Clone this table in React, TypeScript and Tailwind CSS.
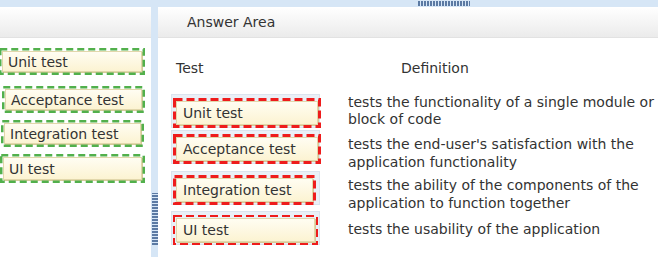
import React from "react";

function Dashed({ color, w, h, sw, dash }: { color: string; w: number; h: number; sw: number; dash: string }) {
  return (
    <svg className="absolute left-0 top-0 pointer-events-none" width={w} height={h}>
      <rect x={sw / 2} y={sw / 2} width={w - sw} height={h - sw} fill="none" stroke={color} strokeWidth={sw} strokeDasharray={dash} />
    </svg>
  );
}

function Tile({ label, pl = "pl-[5px]" }: { label: string; pl?: string }) {
  return (
    <div
      className={`flex h-full w-full items-center ${pl} border border-[#e2d7ab] bg-gradient-to-b from-[#fffdf2] to-[#fcf3d2] text-[14px] leading-none text-[#333] shadow-[1px_1px_0_#d6ca99]`}
    >
      {label}
    </div>
  );
}

function LeftItem({ label, cls, w, h = 27 }: { label: string; cls: string; w: number; h?: number }) {
  return (
    <div className={`relative p-[3px] ${cls}`} style={{ width: w, height: h }}>
      <Tile label={label} />
      <Dashed color="#52b04c" w={w} h={h} sw={2.5} dash="7 4" />
    </div>
  );
}

function DropRow({ label, def, w, cls, tpt, sw = 3 }: { label: string; def: React.ReactNode; w: number; cls: string; tpt: string; sw?: number }) {
  return (
    <div className={`flex h-[34px] items-start ${cls}`}>
      <div className="h-[34px] w-[149px] shrink-0 border border-[#dbe4ee] bg-[#eaf0f7] pl-[1px] pt-[3px]">
        <div className="relative h-[30px] p-[3px]" style={{ width: w }}>
          <Tile label={label} pl="pl-[6px]" />
          <Dashed color="#ee1c1c" w={w} h={30} sw={sw} dash="8 4" />
        </div>
      </div>
      <div className={`ml-[28px] whitespace-nowrap text-[14px] text-[#333] ${tpt}`}>{def}</div>
    </div>
  );
}

export default function App() {
  return (
    <div className="relative h-[257px] w-[658px] overflow-hidden bg-white" style={{ fontFamily: '"DejaVu Sans", Verdana, sans-serif' }}>
      <div className="relative h-[7px] bg-[#d6e6f6]">
        <div className="absolute left-[418px] top-[1px] h-[5px] w-[52px] bg-[repeating-linear-gradient(90deg,#3d5f8f_0_2px,transparent_2px_3px)] opacity-80" />
      </div>
      <div className="flex h-[250px]">
        <div className="w-[151px]">
          <div className="h-[31px] border-b border-[#e2e2e2] bg-gradient-to-b from-white to-[#ebebeb]" />
          <div className="flex flex-col pt-[10px]">
            <LeftItem label="Unit test" cls="-ml-[1px]" w={146} />
            <LeftItem label="Acceptance test" cls="ml-[2px] mt-[11px]" w={143} />
            <LeftItem label="Integration test" cls="ml-[1px] mt-[7px]" w={143} />
            <LeftItem label="UI test" cls="ml-0 mt-[7px]" w={145} h={29} />
          </div>
        </div>
        <div className="relative w-[7px] bg-[#d6e6f6]">
          <div className="absolute left-[1px] top-[186px] h-[52px] w-[6px] bg-[repeating-linear-gradient(0deg,#3d5f8f_0_2px,transparent_2px_3px)] opacity-80" />
        </div>
        <div className="flex-1">
          <div className="flex h-[31px] items-center border-b border-[#e2e2e2] bg-gradient-to-b from-white to-[#ebebeb] pl-[29px] text-[14px] text-[#333]">
            Answer Area
          </div>
          <div className="flex h-[56px] items-start pt-[22px] text-[14px] leading-[17px] text-[#333]">
            <div className="ml-[18px] w-[225px]">Test</div>
            <div>Definition</div>
          </div>
          <div className="flex flex-col pl-[13px]">
            <DropRow label="Unit test" w={148} cls="" tpt="pt-0 leading-[17px]" def={<>tests the functionality of a single module or<br />block of code</>} />
            <DropRow label="Acceptance test" w={148} cls="mt-[2px]" tpt="pt-[5px] leading-[18px]" def={<>tests the end-user's satisfaction with the<br />application functionality</>} />
            <DropRow label="Integration test" w={143} cls="mt-[7px]" tpt="pt-[5px] leading-[18px]" def={<>tests the ability of the components of the<br />application to function together</>} />
            <DropRow label="UI test" w={145} cls="mt-[6px]" sw={2} tpt="pt-[10px] leading-[17px]" def={<>tests the usability of the application</>} />
          </div>
        </div>
      </div>
    </div>
  );
}
